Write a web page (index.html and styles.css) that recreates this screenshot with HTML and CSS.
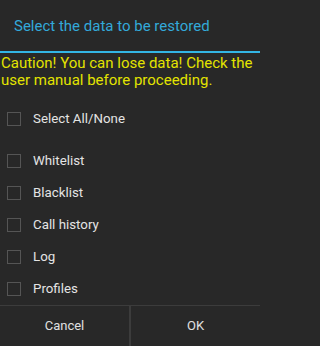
FILE: index.html
```html
<!DOCTYPE html>
<html>
<head>
<meta charset="utf-8">
<link rel="stylesheet" href="styles.css">
</head>
<body>
<div class="dialog">
  <div class="header"><span class="title">Select the data to be restored</span></div>
  <div class="accent"></div>
  <div class="caution">Caution! You can lose data! Check the user manual before proceeding.</div>
  <div class="list">
    <div class="row all"><span class="box"></span><span class="label">Select All/None</span></div>
    <div class="row"><span class="box"></span><span class="label">Whitelist</span></div>
    <div class="row"><span class="box"></span><span class="label">Blacklist</span></div>
    <div class="row"><span class="box"></span><span class="label">Call history</span></div>
    <div class="row"><span class="box"></span><span class="label">Log</span></div>
    <div class="row"><span class="box"></span><span class="label">Profiles</span></div>
  </div>
  <div class="buttons">
    <div class="btn">Cancel</div>
    <div class="sep"></div>
    <div class="btn">OK</div>
  </div>
</div>
</body>
</html>
```
FILE: styles.css
```css
html, body {
  margin: 0;
  padding: 0;
  background: #282828;
}
.dialog {
  width: 260px;
  height: 346px;
  background: #282828;
  font-family: Roboto, "Noto Sans", sans-serif;
  display: flex;
  flex-direction: column;
  overflow: hidden;
}
.header {
  height: 52px;
  display: flex;
  align-items: center;
  padding-left: 14px;
  padding-top: 1px;
  box-sizing: border-box;
}
.title {
  color: #33a9d9;
  font-size: 15px;
}
.accent {
  height: 2px;
  background: #33b5e5;
}
.caution {
  color: #e3e300;
  font-size: 15px;
  line-height: 17px;
  padding: 2px 1px 0 1px;
  height: 36px;
  box-sizing: border-box;
}
.list {
  display: flex;
  flex-direction: column;
  padding-top: 14px;
}
.row {
  height: 32px;
  display: flex;
  align-items: center;
  padding-left: 7px;
}
.row.all {
  margin-bottom: 10px;
}
.box {
  width: 12px;
  height: 12px;
  border: 1px solid #555555;
  margin-right: 12px;
}
.label {
  color: #e4e4e4;
  font-size: 13.3px;
}
.buttons {
  margin-top: auto;
  height: 42px;
  box-sizing: border-box;
  border-top: 1px solid #3c3c3c;
  display: flex;
}
.btn {
  flex: 1;
  display: flex;
  align-items: center;
  justify-content: center;
  color: #e0e0e0;
  font-size: 13px;
}
.sep {
  width: 2px;
  background: #3c3c3c;
}
```
